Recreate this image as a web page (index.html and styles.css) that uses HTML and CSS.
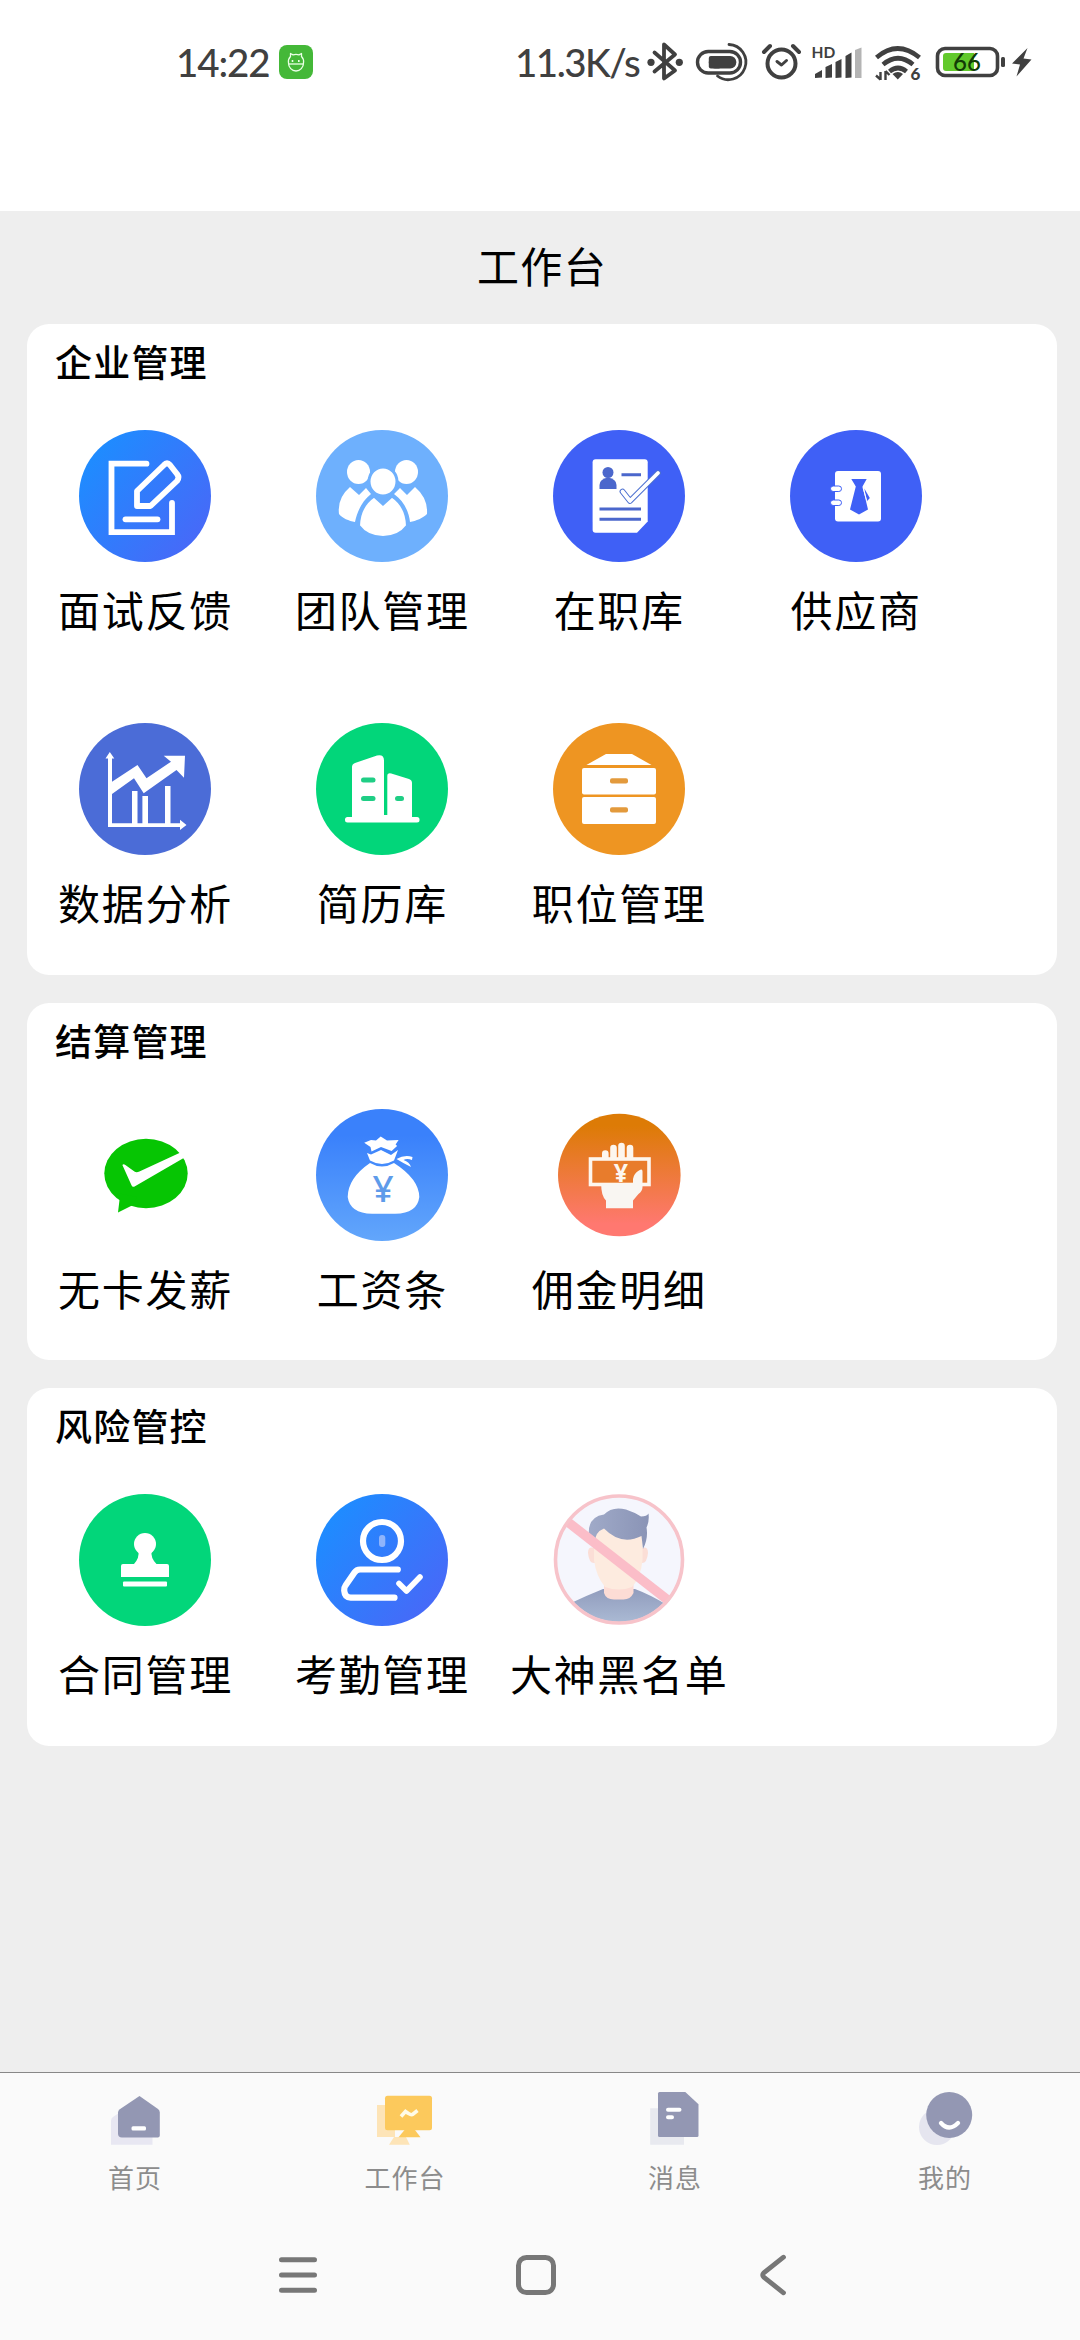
FILE: index.html
```html
<!DOCTYPE html>
<html lang="zh-CN">
<head>
<meta charset="UTF-8">
<title>工作台</title>
<link rel="stylesheet" href="styles.css">
</head>
<body>
<div class="screen">
  <header class="status">
    <span class="clock">14:22</span>
    <svg class="app-badge" viewBox="0 0 34 34">
      <rect width="34" height="34" rx="8" fill="#44b838"/>
      <g fill="none" stroke="#eaffe6" stroke-width="1.3" stroke-linejoin="round">
        <path d="M9.500 18c-.5-3 .5-5 2-6.500V8.500l2.500 1.300q3-1 6 0l2.500-1.300v3c1.500 1.500 2.500 3.500 2 6.500a7.500 8 0 0 1-15 0z"/>
        <path d="M9.500 19h15"/>
      </g>
      <path d="M13.500 15v2M19.800 15v2" stroke="#eaffe6" stroke-width="1.600"/>
    </svg>
    <span class="speed">11.3K/s</span>
    <svg class="st-bt" viewBox="645 37 40 50">
      <path d="M654.500 52.500 675 70.500 664 78.500V44.500L675 54.500 654.500 71.500" fill="none" stroke="#404040" stroke-width="3.800" stroke-linejoin="round" stroke-linecap="round"/>
      <circle cx="651" cy="62.300" r="3.600" fill="#404040"/><circle cx="679.300" cy="62.300" r="3.600" fill="#404040"/>
    </svg>
    <svg class="st-pill" viewBox="695 37 56 50" fill="none" stroke="#404040" stroke-width="3.400">
      <rect x="697.500" y="51.500" width="43" height="21.500" rx="10.700"/>
      <rect x="708.800" y="56" width="27.500" height="12.500" rx="6" fill="#404040" stroke="none"/>
      <rect x="708.800" y="56" width="12" height="12.500" rx="2" fill="#404040" stroke="none"/>
      <path d="M729 44.500a17.600 17.600 0 1 1-11.500 31.500" stroke-width="2.800" stroke-linecap="round"/>
    </svg>
    <svg class="st-alarm" viewBox="761 37 42 50" fill="none" stroke="#404040" stroke-width="4" stroke-linecap="round" stroke-linejoin="round">
      <circle cx="781.500" cy="63.500" r="14"/>
      <path d="M764 52l6-6M799 52l-6-6"/>
      <path d="M777 61.500l4.500 3.500 5-4.500" stroke-width="3"/>
    </svg>
    <svg class="st-signal" viewBox="811 37 52 50">
      <text class="hd" x="811.500" y="58">HD</text>
      <path fill="#404040" d="M815 78v-4l7-4v7.500zM825.500 78V67l6.500-3v13.500zM835.500 78V62l6-3v18.500zM845.500 78V56l6-3.500V77.500z"/>
      <path fill="#b4b4b4" d="M855 78V50l6.500-2.500V78z"/>
    </svg>
    <svg class="st-wifi" viewBox="874 37 50 50">
      <g fill="none" stroke="#404040" stroke-width="4.600">
        <path d="M876.500 57.500q21-18 43 0"/><path d="M883 64.500q15-12.500 30 0"/><path d="M889.500 71.500q8.500-7 17 0"/>
      </g>
      <path d="M892.500 74q5.500-4 10.500 0l-5.200 5.500z" fill="#404040"/>
      <path d="M880.500 72v8M876 75.500l4.500 4M885.500 80v-9M889.500 75l-4-4" stroke="#404040" stroke-width="2.400"/>
      <text class="wifi6" x="910.500" y="80">6</text>
    </svg>
    <svg class="st-battery" viewBox="935 37 72 50">
      <rect x="937.500" y="48.500" width="60" height="27" rx="7.500" fill="none" stroke="#404040" stroke-width="3.600"/>
      <path d="M946 53h28v18h-28q-3 0-3-3V56q0-3 3-3z" fill="#62c92c"/>
      <rect x="1001" y="57" width="4" height="10" rx="1.500" fill="#404040"/>
      <text class="pct" x="967" y="70.500" text-anchor="middle">66</text>
    </svg>
    <svg class="st-bolt" viewBox="1011 37 22 50"><path fill="#404040" d="M1027.500 48 1012 63.500l8 1-3.500 12 15-17-8-1z"/></svg>
  </header>

  <main class="content">
    <h1 class="page-title">工作台</h1>

    <section class="card">
      <h2 class="card-title">企业管理</h2>
      <div class="grid">
        <div class="item">
          <svg class="icon" viewBox="0 0 132 132">
            <defs><linearGradient id="blue" x1=".08" y1=".2" x2=".9" y2=".85"><stop offset="0" stop-color="#1e8cff"/><stop offset="1" stop-color="#4769f8"/></linearGradient></defs>
            <circle cx="66" cy="66" r="66" fill="url(#blue)"/>
            <g fill="none" stroke="#fff" stroke-width="5.800" stroke-linecap="round" stroke-linejoin="round">
              <path d="M67.500 33.700H32.500V102.200H93V73" stroke-linejoin="miter"/>
              <path d="M58 61V76H71.500L98 51q3-3.500 0-7L91 35q-3-3.500-6 0z"/>
              <path d="M46.500 89.300H78.500"/>
            </g>
          </svg>
          <span class="label">面试反馈</span>
        </div>
        <div class="item">
          <svg class="icon" viewBox="0 0 132 132">
            <circle cx="66" cy="66" r="66" fill="#6eb0fd"/>
            <g fill="#fff">
              <ellipse cx="42.500" cy="42" rx="11.500" ry="12"/><ellipse cx="90.500" cy="42" rx="11.500" ry="12"/>
              <path d="M34 57l9 8 7-7 5 6C46 71 41 82 39 92c-6-1-13-4-16-8q-2-16 11-27z"/>
              <path d="M99 57l-8 8-7-7-6 6c10 7 15 18 16 28 6-1 13-4 17-8q1-16-12-27z"/>
            </g>
            <g fill="#fff" stroke="#6eb0fd" stroke-width="3">
              <ellipse cx="67" cy="51.500" rx="14" ry="14.500"/>
              <path d="M58 66l9 8 9-8q15 10 15.500 30Q83 107.500 67 107.500T42.500 96Q43 76 58 66z"/>
            </g>
          </svg>
          <span class="label">团队管理</span>
        </div>
        <div class="item">
          <svg class="icon" viewBox="0 0 132 132">
            <circle cx="66" cy="66" r="66" fill="#3f60f6"/>
            <path fill="#fff" d="M42.600 29.300H91.700q3 0 3 3V91.500L84 102.700H42.600q-3 0-3-3V32.300q0-3 3-3z"/>
            <g fill="#4b67cc"><circle cx="55" cy="42.500" r="5.500"/><path d="M46.500 59v-4q0-6 8.500-7.500 8.500 1.500 8.500 7.500v4z"/></g>
            <path d="M68.500 44.700H88M46.500 79H88M46.500 89.300H88" stroke="#4b67cc" stroke-width="3"/>
            <path d="M69.500 61.500 77 71 105 43" fill="none" stroke="#4b6fd0" stroke-width="5.800" stroke-linecap="round" stroke-linejoin="round"/>
            <path d="M69.500 61.500 77 71 105 43" fill="none" stroke="#fff" stroke-width="3.800" stroke-linecap="round" stroke-linejoin="round"/>
          </svg>
          <span class="label">在职库</span>
        </div>
        <div class="item">
          <svg class="icon" viewBox="0 0 132 132">
            <circle cx="66" cy="66" r="66" fill="#3f60f6"/>
            <rect x="45" y="41" width="46" height="50.500" rx="3" fill="#fff"/>
            <g fill="#fff" stroke="#3f60f6" stroke-width="1"><rect x="40.500" y="56" width="11" height="5.500" rx="2.700"/><rect x="40.500" y="70" width="11" height="5.500" rx="2.700"/></g>
            <path d="M61.300 49H76.700L72.500 56.500 78 79.500 69 84.500 60 79.500 65.800 56.500z" fill="#3f60f6"/>
            <path d="M74.300 58.500 79.800 68l-3 3.500z" fill="#3f60f6"/><path d="M73 57.500l4 14" stroke="#fff" stroke-width="1"/>
          </svg>
          <span class="label">供应商</span>
        </div>
        <div class="item">
          <svg class="icon" viewBox="0 0 132 132">
            <circle cx="66" cy="66" r="66" fill="#4b6cd7"/>
            <g fill="#fff">
              <path d="M30.800 29l4.500 6.500H33V100.200H101v-3.500L107.500 102 101 107v-3H29V35.500H26.500z"/>
              <path d="M33 58.700 58.500 42 67.500 55.300 92 38.700 84.700 32.700H106L105 54.700 97.500 47 64.700 70.300 55 55.300 33 71z"/>
              <path d="M53 68h5.500v33H53zM63.400 73H69v28H63.400zM86 63h5.500v38H86z"/>
            </g>
          </svg>
          <span class="label">数据分析</span>
        </div>
        <div class="item">
          <svg class="icon" viewBox="0 0 132 132">
            <circle cx="66" cy="66" r="66" fill="#02d67a"/>
            <g fill="#fff">
              <path d="M36 96V44q0-3 3-4l22-7.500q7-1.500 7 5V96z"/>
              <path d="M71.300 96V53q0-3.500 4-2.500L93 56q3 1 3 4V96z"/>
              <path d="M67 92h5v4h-5z"/>
              <rect x="29" y="94" width="74.500" height="5.500" rx="2.500"/>
            </g>
            <g fill="#1fce85"><rect x="45" y="54.500" width="14.500" height="5" rx="2.500"/><rect x="45" y="73" width="14.500" height="5" rx="2.500"/><rect x="79" y="73" width="9" height="5" rx="2.500"/></g>
          </svg>
          <span class="label">简历库</span>
        </div>
        <div class="item">
          <svg class="icon" viewBox="0 0 132 132">
            <circle cx="66" cy="66" r="66" fill="#ee9522"/>
            <g fill="#fff"><path d="M33.400 42 53 31H79L98.500 42z"/><rect x="29" y="45" width="74" height="26.500" rx="2"/><rect x="29" y="74" width="74" height="27" rx="2"/></g>
            <g fill="#e39a3c"><rect x="57" y="55.300" width="18" height="5.200" rx="2"/><rect x="57" y="84.300" width="18" height="5.200" rx="2"/></g>
          </svg>
          <span class="label">职位管理</span>
        </div>
      </div>
    </section>

    <section class="card">
      <h2 class="card-title">结算管理</h2>
      <div class="grid">
        <div class="item">
          <svg class="icon" viewBox="0 0 132 132">
            <g fill="#06c503"><ellipse cx="67" cy="64.500" rx="41.700" ry="34.700"/><path d="M38 84q4 4 2.500 7L39 103.500 54 96l4-8z"/></g>
            <path fill="#fff" d="M43.400 56q1-1.500 3 0l9 6.500q2 1.300 5 0L102 43.300l4 5L56 77.200q-2.500 1.500-3.500-1z"/>
          </svg>
          <span class="label">无卡发薪</span>
        </div>
        <div class="item">
          <svg class="icon" viewBox="0 0 132 132">
            <defs><linearGradient id="bag" x1="0" y1="0" x2="0" y2="1"><stop offset=".2" stop-color="#3a81fb"/><stop offset="1" stop-color="#62a6fb"/></linearGradient></defs>
            <circle cx="66" cy="66" r="66" fill="url(#bag)"/>
            <g fill="#fff">
              <path d="M48.200 33.700 55 31l5 .5 4.700-4L71 31.500l11.600-.5-3 4.500 1.500 1.500-5.500 5L65 38l-9.500 4.500-1-4.500z"/>
              <path d="M51 44l4 1.500L65 41l10 5 7-5-4 10.500q-12 7-24 0z"/>
              <path d="M54 54q12 7 24 0 25 16 25.300 34-2 16.500-24 16.700H56Q34 104.500 31.700 88 32 69 54 54z"/>
              <path d="M80.500 50q8-4.500 16-2l-.5 3q-5-2-8.500 0 6 2 7.500 7-8-4-14.500-8z"/>
            </g>
            <text class="yen-bag" x="67" y="92.500" text-anchor="middle">¥</text>
          </svg>
          <span class="label">工资条</span>
        </div>
        <div class="item">
          <svg class="icon" viewBox="0 0 132 132">
            <defs><linearGradient id="cash" x1="0" y1="0" x2="0" y2="1"><stop offset=".1" stop-color="#dd7b06"/><stop offset=".9" stop-color="#ff7870"/></linearGradient></defs>
            <circle cx="66.300" cy="66" r="61.300" fill="url(#cash)"/>
            <g stroke="#fdf6ee" stroke-width="6.600" stroke-linecap="round"><path d="M52.300 44.500v6M60.500 39v12M68.500 37v14M77 39v12"/></g>
            <rect x="37.500" y="50" width="58.500" height="25.500" fill="#e87c2c" stroke="#fdf6ee" stroke-width="3.600"/>
            <path fill="#f9f6f2" d="M48.200 75H80V70q1-6 6-8.500 3.500-2.500 3.500 1V78q0 4-4 7L80 91.500V99.300H53V91.500q-5-5-4.800-16.500z"/>
            <text class="yen-cash" x="67.800" y="72.500" text-anchor="middle">¥</text>
          </svg>
          <span class="label">佣金明细</span>
        </div>
      </div>
    </section>

    <section class="card">
      <h2 class="card-title">风险管控</h2>
      <div class="grid">
        <div class="item">
          <svg class="icon" viewBox="0 0 132 132">
            <circle cx="66" cy="66" r="66" fill="#02d67a"/>
            <g fill="#fff"><circle cx="66" cy="50" r="11"/><path d="M59.500 57q1 7-4.500 13H44q-2 0-2 2V83H90V72q0-2-2-2H77.500Q71.500 64 72.500 57z"/><rect x="44" y="87.500" width="44" height="5" rx="1"/></g>
          </svg>
          <span class="label">合同管理</span>
        </div>
        <div class="item">
          <svg class="icon" viewBox="0 0 132 132">
            <circle cx="66" cy="66" r="66" fill="url(#blue)"/>
            <g fill="none" stroke="#fff" stroke-width="6.200" stroke-linecap="round" stroke-linejoin="round">
              <circle cx="66" cy="47" r="19"/>
              <path d="M81.800 75.500H44q-3.500 0-5.500 3L29.500 91.500q-1.500 2-1.300 5 .5 7 6.500 7.200H78.500"/>
              <path d="M83 89.500 90.500 97 104 83" stroke-width="5.600"/>
            </g>
            <rect x="63" y="41" width="6.300" height="12" rx="3" fill="#8fb4fb"/>
          </svg>
          <span class="label">考勤管理</span>
        </div>
        <div class="item">
          <svg class="icon" viewBox="0 0 132 132">
            <defs>
              <clipPath id="face"><circle cx="66" cy="66" r="62"/></clipPath>
              <linearGradient id="shirt" x1="0" y1="0" x2="0" y2="1"><stop offset="0" stop-color="#919cbd"/><stop offset="1" stop-color="#adbdd6"/></linearGradient>
              <linearGradient id="hair" x1="0" y1="0" x2="1" y2="0"><stop offset="0" stop-color="#a0aac8"/><stop offset="1" stop-color="#8a94b6"/></linearGradient>
            </defs>
            <circle cx="66" cy="65.500" r="63.500" fill="#f5f6fd"/>
            <g clip-path="url(#face)">
              <path fill="url(#shirt)" d="M18 109Q35 101 50 95H82Q98 101 114 111L100 132H30z"/>
              <path fill="#fddcd5" d="M51 86H80.500V99q-3 6.500-10 6.500H61q-8 0-10-6.500z"/>
              <path fill="#fbded6" d="M41 54q-6-2-6 5 1 11 7 10zM89 54q6-2 6 5-1 11-7 10z"/>
              <path fill="#fdebdf" d="M41 40Q50 30 66 32T89.500 42V66Q88 83 79 93q-13 5-27 0Q43 82 41 66z"/>
              <path fill="url(#hair)" d="M36 42Q34 23 51 20.500 59 12 73 15.500q9 3 15 7 6 0 7.500-3 1 8-2 14 2 11-3.500 21.500L88.500 42Q68 52 51 34.500 42 38 42 48 36 46 36 42z"/>
            </g>
            <path d="M15.500 28.500 116 107" stroke="#fbbdc8" stroke-width="9.500"/>
            <circle cx="66" cy="65.500" r="63.500" fill="none" stroke="#f7c3ca" stroke-width="3.600"/>
          </svg>
          <span class="label">大神黑名单</span>
        </div>
      </div>
    </section>
  </main>

  <nav class="tabs">
    <div class="tab">
      <svg class="tab-icon" viewBox="0 0 60 60">
        <path fill="#e8e7f2" d="M6 54.700V31q0-3 2-4l6-4 33.500 4V54.700z"/>
        <path fill="#9397b3" d="M34.500 6 53 19q1.800 1.300 1.800 3.500V45.500q0 2-2 2H17q-4 0-4-4V22.500q0-2 1.800-3.300z"/>
        <rect x="26.500" y="36.200" width="14.500" height="4.300" rx="1.500" fill="#fff"/>
      </svg>
      <span class="tab-label">首页</span>
    </div>
    <div class="tab">
      <svg class="tab-icon" viewBox="0 0 60 60">
        <path fill="#fde4b7" d="M2 15H20V47H2zM19 47H31L34.800 54.700H14z"/>
        <rect x="10" y="5.700" width="47" height="34.500" rx="2.500" fill="#fcc95c"/>
        <path fill="#fcc95c" d="M29.500 40H40l5.500 7.200H23.500z"/>
        <path d="M26 26.500 30.500 21.500q5.500 4 7 3l5-4" fill="none" stroke="#fffbe8" stroke-width="3.600"/>
      </svg>
      <span class="tab-label">工作台</span>
    </div>
    <div class="tab">
      <svg class="tab-icon" viewBox="0 0 60 60">
        <path fill="#e8e9ef" d="M5.200 18.300H25V47H39v7.700H5.200z"/>
        <path fill="#9397b3" d="M14.500 2H40.300L53.500 14.300V45.500q0 1.500-1.500 1.500H14.500q-1.500 0-1.500-1.500V3.500Q13 2 14.500 2z"/>
        <path d="M23 19.700H34.500M23 27.300H27" stroke="#fff" stroke-width="4" stroke-linecap="round"/>
      </svg>
      <span class="tab-label">消息</span>
    </div>
    <div class="tab">
      <svg class="tab-icon" viewBox="0 0 60 60">
        <circle cx="22" cy="37" r="18" fill="#e5e5ef"/>
        <circle cx="34.200" cy="25" r="23" fill="#9397b3"/>
        <path d="M26 33q8 9 17 0" fill="none" stroke="#fff" stroke-width="4.300" stroke-linecap="round"/>
      </svg>
      <span class="tab-label">我的</span>
    </div>
  </nav>

  <footer class="sysnav">
    <svg class="sys" viewBox="0 0 48 48"><path d="M7.500 8.700H40.500M7.500 24H40.500M7.500 39.300H40.500" stroke="#777" stroke-width="5" stroke-linecap="round"/></svg>
    <svg class="sys" viewBox="0 0 48 48"><rect x="6.500" y="6.500" width="35" height="35" rx="8" fill="none" stroke="#777" stroke-width="5"/></svg>
    <svg class="sys" viewBox="0 0 48 48"><path d="M33.500 6.200 13.800 21.800q-2.300 2.200 0 4.400L33.500 41.800" fill="none" stroke="#777" stroke-width="4.800" stroke-linecap="round"/></svg>
  </footer>
</div>
</body>
</html>
```
FILE: styles.css
```css
* { box-sizing: border-box; }
body {
  margin: 0;
  background: #fff;
  color: #000;
  font-family: "Noto Sans CJK SC", sans-serif;
}
svg { display: block; flex: none; }
.screen {
  width: 1080px;
  height: 2340px;
  display: flex;
  flex-direction: column;
  overflow: hidden;
}

/* status bar */
.status {
  height: 211px;
  padding: 37px 0 0 176px;
  display: flex;
  align-items: flex-start;
  font-family: Lato, sans-serif;
  font-weight: 500;
  font-size: 38.500px;
  line-height: 50px;
  color: #404040;
  white-space: nowrap;
}
.clock { width: 103px; letter-spacing: -1.100px; }
.app-badge { width: 34px; height: 34px; margin-top: 8px; }
.speed { width: 130px; margin-left: 202px; letter-spacing: -1.500px; }
.st-bt { width: 40px; height: 50px; }
.st-pill { width: 56px; height: 50px; margin-left: 10px; }
.st-alarm { width: 42px; height: 50px; margin-left: 10px; }
.st-signal { width: 52px; height: 50px; margin-left: 8px; }
.st-wifi { width: 50px; height: 50px; margin-left: 11px; }
.st-battery { width: 72px; height: 50px; margin-left: 11px; }
.st-bolt { width: 22px; height: 50px; margin-left: 4px; }
.hd { font: 700 15.500px Lato, sans-serif; fill: #404040; }
.wifi6 { font: 900 17px Lato, sans-serif; fill: #404040; }
.pct { font: 500 24px Lato, sans-serif; fill: #123b06; }

/* workbench */
.content {
  flex: 1;
  display: flex;
  flex-direction: column;
  gap: 28px;
  padding: 0 23px 0 27px;
  background: #eee;
}
.page-title {
  margin: 0 0 -28px;
  height: 113px;
  font-size: 42px;
  font-weight: 400;
  line-height: 107px;
  letter-spacing: 1.400px;
  text-align: center;
}
.card {
  background: #fff;
  border-radius: 22px;
  padding: 10px 0 42.700px;
}
.card-title {
  margin: 0 0 42px 28px;
  font-size: 37px;
  font-weight: 500;
  line-height: 54px;
  letter-spacing: 1.200px;
}
.grid {
  display: grid;
  grid-template-columns: repeat(4, 23%);
  row-gap: 84px;
}
.item {
  display: flex;
  flex-direction: column;
  align-items: center;
  gap: 17px;
}
.icon { width: 132px; height: 132px; }
.label {
  font-size: 42px;
  line-height: 60px;
  letter-spacing: 1.700px;
  white-space: nowrap;
}
.yen-bag { font: 500 37px "Noto Sans", sans-serif; fill: #5e9bea; }
.yen-cash { font: 700 25px "Noto Sans", sans-serif; fill: #fdf6ee; }

/* tab bar */
.tabs {
  height: 138px;
  display: flex;
  border-top: 1px solid #888;
  background: #fafafa;
}
.tab {
  flex: 1;
  padding-top: 17px;
  display: flex;
  flex-direction: column;
  align-items: center;
  gap: 7px;
}
.tab-icon { width: 60px; height: 60px; }
.tab-label {
  font-size: 26px;
  line-height: 40px;
  letter-spacing: 1px;
  color: #8c8c8c;
}

/* system navigation */
.sysnav {
  height: 130px;
  display: flex;
  justify-content: center;
  align-items: center;
  gap: 190px;
  padding-right: 8px;
  background: #fafafa;
}
.sys { width: 48px; height: 48px; }
```
